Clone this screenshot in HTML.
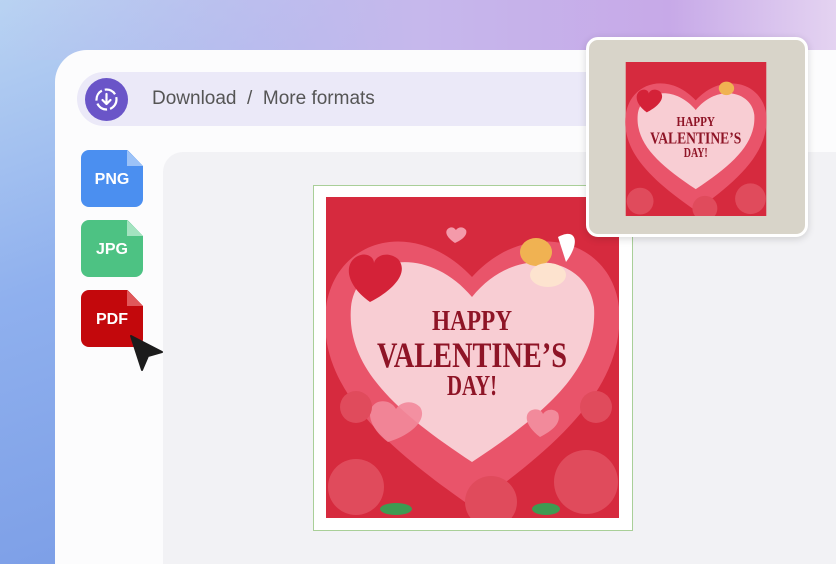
<!DOCTYPE html>
<html style="width:836px;height:564px;overflow:hidden"><head><meta charset="utf-8"><style>
body{margin:0;width:836px;height:564px;overflow:hidden;position:relative;font-family:"Liberation Sans",sans-serif;
background:linear-gradient(160deg,#b9d3f2 0%,#8fb0ee 35%,#6c8fe0 100%);}
.topgrad{position:absolute;left:0;top:0;width:836px;height:60px;background:linear-gradient(90deg,rgba(180,205,240,0) 0%,#c6b8ec 50%,#c7a9e8 80%,#e4d3f1 100%);}
.panel{position:absolute;left:55px;top:50px;width:781px;height:514px;background:#fcfcfd;border-radius:32px 0 0 0;}
.bar{position:absolute;left:77px;top:72px;width:560px;height:54px;background:#ebe9f8;border-radius:27px;}
.circ{position:absolute;left:85px;top:78px;width:43px;height:43px;border-radius:50%;background:#6a55c8;}
.crumb{position:absolute;left:152px;top:88px;font-size:19px;color:#555;}
.canvas{position:absolute;left:163px;top:152px;width:673px;height:412px;background:#f2f2f5;border-radius:20px 0 0 0;}
.f{position:absolute;left:81px;width:62px;height:57px;border-radius:8px;color:#fff;font-weight:bold;font-size:16px;text-align:center;line-height:60px;clip-path:polygon(0 0,75% 0,100% 28%,100% 100%,0 100%);}
.fold{position:absolute;left:127px;width:16px;height:16px;}
.frame{position:absolute;left:313px;top:185px;width:318px;height:344px;background:#fff;border:1px solid #a9cf98;}
.thumb{position:absolute;left:586px;top:37px;width:216px;height:194px;background:#d8d4c9;border:3px solid #fff;border-radius:12px;box-shadow:0 2px 8px rgba(0,0,0,.15);}
.t{font-family:"Liberation Serif",serif;font-weight:bold;fill:#8e1426}
</style></head><body>
<div class="topgrad"></div>
<div class="panel"></div>
<div class="bar"></div>
<div class="circ"><svg width="43" height="43" viewBox="0 0 43 43"><circle cx="21.5" cy="21.5" r="10" fill="none" stroke="#fff" stroke-width="2.2" stroke-dasharray="12 3"/><path d="M21.5 16v10M17.5 22l4 4 4-4" fill="none" stroke="#fff" stroke-width="2.2" stroke-linecap="round" stroke-linejoin="round"/></svg></div>
<div class="crumb">Download &nbsp;/&nbsp; More formats</div>
<div class="canvas"></div>
<div class="f" style="top:150px;background:#4b8ff0">PNG</div>
<div class="fold" style="top:150px;background:#9cc2f7;clip-path:polygon(0 0,100% 100%,0 100%)"></div>
<div class="f" style="top:220px;background:#4dc283">JPG</div>
<div class="fold" style="top:220px;background:#a3e3c0;clip-path:polygon(0 0,100% 100%,0 100%)"></div>
<div class="f" style="top:290px;background:#c3080c">PDF</div>
<div class="fold" style="top:290px;background:#e0585a;clip-path:polygon(0 0,100% 100%,0 100%)"></div>
<svg style="position:absolute;left:128px;top:334px" width="40" height="40"><path d="M3 2 L34 18 L20 22 L14 36 Z" fill="#1c1c1c" stroke="#1c1c1c" stroke-width="2" stroke-linejoin="round"/></svg>
<div class="frame"></div>
<svg style="position:absolute;left:326px;top:197px" width="293" height="321" viewBox="0 0 293 321">
<rect width="293" height="321" fill="#d62a3e"/>
<path d="M146 310 C60 250 -10 190 0 110 C10 40 90 20 146 80 C200 20 285 40 293 110 C300 190 230 250 146 310Z" fill="#e9546a"/>
<path d="M146 265 C70 215 20 170 25 110 C30 60 100 45 146 100 C190 45 262 60 268 110 C272 170 222 215 146 265Z" fill="#f8cdd3"/>
<path d="M44 105 C20 88 18 68 30 60 C40 54 48 60 48 66 C50 58 62 54 72 62 C84 76 66 94 44 105Z" fill="#d42238"/>
<path d="M62 245 C40 228 40 210 52 205 C62 202 68 208 70 212 C74 205 86 202 94 210 C102 222 86 238 62 245Z" fill="#f28a9b" opacity=".9"/>
<path d="M214 240 C198 228 198 216 206 213 C212 211 216 214 217 217 C220 212 228 211 232 216 C236 226 226 234 214 240Z" fill="#f28a9b"/>
<path d="M129 46 C120 40 118 34 123 31 C127 29 129 32 130 33 C132 30 137 29 140 33 C142 38 136 43 129 46Z" fill="#f49aaa"/>
<text x="146" y="133" text-anchor="middle" class="t" font-size="28" textLength="80" lengthAdjust="spacingAndGlyphs">HAPPY</text>
<text x="146" y="170" text-anchor="middle" class="t" font-size="36" textLength="190" lengthAdjust="spacingAndGlyphs">VALENTINE’S</text>
<text x="146" y="198" text-anchor="middle" class="t" font-size="28" textLength="50" lengthAdjust="spacingAndGlyphs">DAY!</text>
<ellipse cx="210" cy="55" rx="16" ry="14" fill="#f0b252"/><ellipse cx="222" cy="78" rx="18" ry="12" fill="#fde3cf"/><path d="M232 40 C250 30 255 45 240 65" fill="#fff"/>
<g fill="#e04b5c"><circle cx="30" cy="290" r="28"/><circle cx="260" cy="285" r="32"/><circle cx="165" cy="305" r="26"/><circle cx="30" cy="210" r="16"/><circle cx="270" cy="210" r="16"/></g>
<g fill="#3e9a52"><ellipse cx="70" cy="312" rx="16" ry="6"/><ellipse cx="220" cy="312" rx="14" ry="6"/></g>
</svg>
<div class="thumb"></div>
<svg style="position:absolute;left:622px;top:62px" width="148" height="154" viewBox="0 0 293 321">
<rect width="293" height="321" fill="#d62a3e"/>
<path d="M146 310 C60 250 -10 190 0 110 C10 40 90 20 146 80 C200 20 285 40 293 110 C300 190 230 250 146 310Z" fill="#e9546a"/>
<path d="M146 265 C70 215 20 170 25 110 C30 60 100 45 146 100 C190 45 262 60 268 110 C272 170 222 215 146 265Z" fill="#f8cdd3"/>
<path d="M44 105 C20 88 18 68 30 60 C40 54 48 60 48 66 C50 58 62 54 72 62 C84 76 66 94 44 105Z" fill="#d42238"/>
<text x="146" y="133" text-anchor="middle" class="t" font-size="28" textLength="80" lengthAdjust="spacingAndGlyphs">HAPPY</text>
<text x="146" y="170" text-anchor="middle" class="t" font-size="36" textLength="190" lengthAdjust="spacingAndGlyphs">VALENTINE’S</text>
<text x="146" y="198" text-anchor="middle" class="t" font-size="28" textLength="50" lengthAdjust="spacingAndGlyphs">DAY!</text>
<ellipse cx="210" cy="55" rx="16" ry="14" fill="#f0b252"/>
<g fill="#e04b5c"><circle cx="30" cy="290" r="28"/><circle cx="260" cy="285" r="32"/><circle cx="165" cy="305" r="26"/></g>
</svg>
</body></html>
